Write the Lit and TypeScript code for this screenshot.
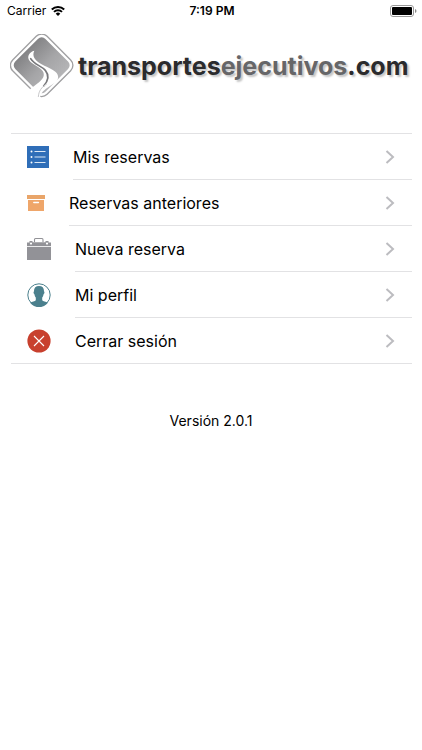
import { LitElement, html, css, svg, type TemplateResult } from "lit";
import { customElement, property } from "lit/decorators.js";

const listIcon = svg`<svg width="22" height="22" viewBox="0 0 22 22" aria-hidden="true">
  <rect width="22" height="22" fill="#2f6eb8"/>
  <g fill="#fff"><circle cx="4.5" cy="5.500" r="1"/><circle cx="4.5" cy="11" r="1"/><circle cx="4.5" cy="16.500" r="1"/></g>
  <path d="M7.5 5.5H18.500M7.5 11H18.500M7.5 16.500H18.500" stroke="#dce8f5" stroke-width="1"/>
</svg>`;

const boxIcon = svg`<svg width="18" height="18" viewBox="0 0 18 18" aria-hidden="true">
  <path d="M0 1h18v4H0z" fill="#e9a569"/>
  <path d="M1 6h16v11H1z" fill="#efa66a"/>
  <path d="M6.8 8.6h4.6" stroke="#fff" stroke-width="1.5" stroke-linecap="round"/>
</svg>`;

const caseIcon = svg`<svg width="24" height="24" viewBox="0 0 24 24" aria-hidden="true">
  <path d="M7.5 5V2.700Q7.500 1.500 8.500 1.500h6.500q1 0 1 1.200V5" fill="none" stroke="#929297" stroke-width="1.100"/>
  <path d="M0 5.500h2.500V4h3v1.300h13V4h3v1.500H24V9H0z" fill="#929297"/>
  <path d="M0 9.800h24V23H0z" fill="#929297"/>
  <circle cx="4" cy="6.600" r="1.100" fill="#fff"/><circle cx="20" cy="6.600" r="1.100" fill="#fff"/>
</svg>`;

const profileIcon = svg`<svg width="24" height="24" viewBox="0 0 24 24" aria-hidden="true">
  <circle cx="12" cy="12" r="11.200" fill="#fff" stroke="#4b808d" stroke-width="1"/>
  <path d="M12 3c3.400 0 5.100 2 5 5.400.8.200.5 2.400-.4 2.900-.3 1.500-.8 2.500-1.400 3.300v2.600c.8 1.200 3.600 1.400 5.800 2.600A11.400 11.400 0 0 1 3 19.800c2.200-1.200 5-1.400 5.800-2.600v-2.600c-.6-.8-1.100-1.800-1.400-3.300-.9-.5-1.200-2.700-.4-2.900C6.900 5 8.600 3 12 3z" fill="#4b808d"/>
</svg>`;

const closeIcon = svg`<svg width="24" height="24" viewBox="0 0 24 24" aria-hidden="true">
  <circle cx="12" cy="12" r="11.600" fill="#c8402e"/>
  <path d="M7 7l10 10M17 7L7 17" stroke="#fff" stroke-width="1.100"/>
</svg>`;

interface MenuItem { label: string; icon: TemplateResult<2>; }

const items: MenuItem[] = [
  { label: "Mis reservas", icon: listIcon },
  { label: "Reservas anteriores", icon: boxIcon },
  { label: "Nueva reserva", icon: caseIcon },
  { label: "Mi perfil", icon: profileIcon },
  { label: "Cerrar sesión", icon: closeIcon },
];

@customElement("menu-row")
class MenuRow extends LitElement {
  @property({ attribute: false }) item!: MenuItem;

  static styles = css`
    :host { display: block; }
    .row {
      display: flex; align-items: stretch; gap: 24px;
      width: 100%; min-height: 46px; padding: 0 0 0 16px;
      border: 0; background: none; color: #000; text-align: left;
      font: 16px/24px Inter, sans-serif; cursor: pointer;
    }
    .icon { display: flex; align-items: center; }
    .body {
      flex: 1; display: flex; align-items: center; justify-content: space-between;
      padding-right: 16px; border-bottom: 1px solid #e2e2e4;
    }
    :host(.last) .row { min-height: 45px; }
    :host(.last) .body { border-bottom: 0; }
  `;

  render() {
    return html`<button class="row" type="button">
      <span class="icon">${this.item.icon}</span>
      <span class="body">
        <span>${this.item.label}</span>
        <svg width="12" height="16" viewBox="0 0 12 16" aria-hidden="true">
          <path d="M2.500 2L9 8l-6.500 6" fill="none" stroke="#bcbcc0" stroke-width="2"/>
        </svg>
      </span>
    </button>`;
  }
}

@customElement("app-root")
class AppRoot extends LitElement {
  static styles = css`
    :host {
      display: block; min-height: 100vh; background: #fff; color: #000;
      font-family: Inter, sans-serif;
    }
    .status {
      display: grid; grid-template-columns: 1fr auto 1fr; align-items: center;
      height: 22px; padding: 0 5px 0 7px; font-size: 12px; line-height: 16px;
    }
    .carrier { display: flex; align-items: center; gap: 5px; }
    .time { font-weight: 600; }
    .battery { justify-self: end; display: block; }
    .brand { display: flex; align-items: center; gap: 4px; margin: 0; padding: 12px 10px 0; }
    .brand svg { flex: none; }
    .name {
      font-size: 25px; line-height: 32px; font-weight: 700; color: #2b2b2d;
      white-space: nowrap; text-shadow: 2px 2px 2px #c4c4c4;
    }
    .mid { color: #666668; }
    .list {
      list-style: none; margin: 35px 10px 0 11px; padding: 0;
      border-top: 1px solid #e2e2e4; border-bottom: 1px solid #e2e2e4;
    }
    .version { margin: 48px 0 0; text-align: center; font-size: 14px; line-height: 18px; }
  `;

  render() {
    return html`
      <header class="status">
        <span class="carrier">Carrier
          <svg width="14" height="12" viewBox="0 0 14 12" aria-hidden="true">
            <path d="M.8 4.500a8.800 8.800 0 0 1 12.400 0M3 6.900a5.700 5.700 0 0 1 8 0" fill="none" stroke="#000" stroke-width="2"/>
            <path d="M4.700 8.800a3.200 3.200 0 0 1 4.600 0L7 11z"/>
          </svg>
        </span>
        <span class="time">7:19 PM</span>
        <svg class="battery" width="27" height="12" viewBox="0 0 27 12" aria-hidden="true">
          <rect x=".5" y=".5" width="23" height="11" rx="2.500" fill="#fff" stroke="#999"/>
          <rect x="2" y="2" width="20" height="8" rx="1"/>
          <path d="M25 4v4q1.500-.6 1.500-2T25 4z" fill="#888"/>
        </svg>
      </header>
      <h1 class="brand">
        <svg width="64" height="64" viewBox="0 0 192 192" aria-hidden="true">
          <defs>
            <linearGradient id="metal" x1="0" y1="0" x2="1" y2="0">
              <stop offset="0" stop-color="#848486"/><stop offset=".55" stop-color="#a6a6a8"/><stop offset="1" stop-color="#b4b4b6"/>
            </linearGradient>
          </defs>
          <rect x="22" y="21" width="146" height="146" rx="23" transform="rotate(45 95 94)" fill="#fff" stroke="#a0a0a2" stroke-width="4"/>
          <rect x="31" y="30" width="128" height="128" rx="16" transform="rotate(45 95 94)" fill="url(#metal)"/>
          <path d="M73 50C58 54 51 66 57 78c7 13 30 18 41 33 8 12 1 24-10 33l-28 22 6 26h24c2-14 12-25 30-36l14-9c13-10 14-24 2-34-18-15-49-20-61-38-6-9-6-17-2-25z" fill="#fff"/>
          <path d="M62 74c10 18 32 21 44 35 14 17 8 32-5 47" fill="none" stroke="#77777a" stroke-width="5" stroke-linecap="round"/>
          <path d="M85 189c1-18 9-29 26-40" fill="none" stroke="#c9c9cb" stroke-width="3"/>
        </svg>
        <span class="name">transportes<span class="mid">ejecutivos</span>.com</span>
      </h1>
      <nav aria-label="Menú">
        <ul class="list">
          ${items.map((item, i) => html`<li><menu-row class=${i === items.length - 1 ? "last" : ""} .item=${item}></menu-row></li>`)}
        </ul>
      </nav>
      <p class="version">Versión 2.0.1</p>
    `;
  }
}
